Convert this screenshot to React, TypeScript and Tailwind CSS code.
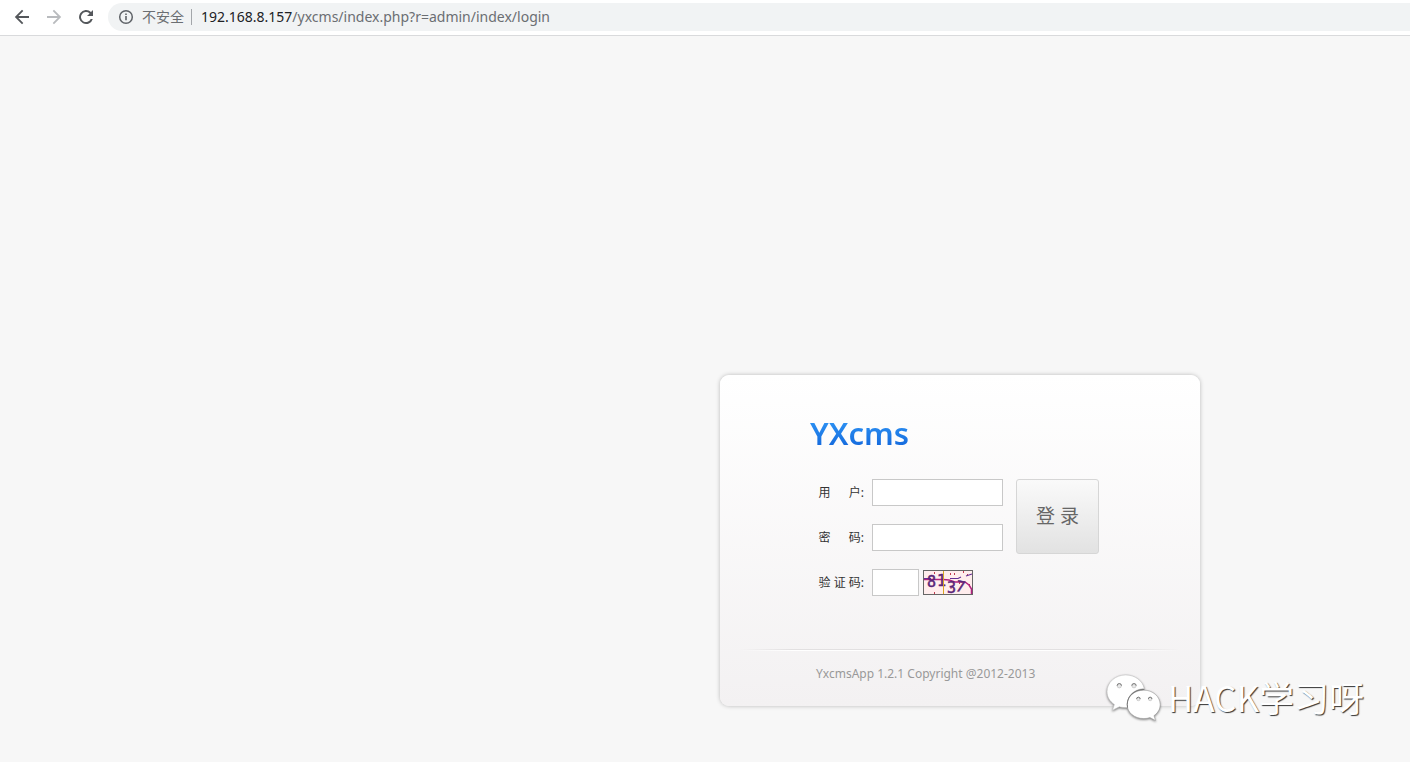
import type { ReactNode } from "react";

const fieldClass =
  "h-[27px] border border-[#c8c8c8] bg-white px-1 text-xs text-[#333333] outline-none";

function Field({ id, label, children }: { id: string; label: string; children: ReactNode }) {
  return (
    <div className="flex items-center gap-2">
      <label htmlFor={id} className="w-[54px] text-right text-xs whitespace-pre text-[#333333]">
        {label}
      </label>
      {children}
    </div>
  );
}

function BrowserBar() {
  return (
    <header className="flex h-9 items-start border-b border-[#d9dadc] bg-white pt-[3px] pl-[14px]">
      <nav className="flex h-7 items-center gap-4">
        <button type="button" aria-label="后退" className="text-[#54575b]">
          <svg width="16" height="16" viewBox="0 0 16 16" fill="currentColor">
            <path d="M15 7H4.400l4.900-4.900L8 .8.8 8 8 15.200l1.300-1.300L4.400 9H15z" />
          </svg>
        </button>
        <button type="button" aria-label="前进" className="text-[#b9bbbe]">
          <svg width="16" height="16" viewBox="0 0 16 16" fill="currentColor">
            <path d="M1 7h10.600L6.700 2.100 8 .8 15.200 8 8 15.200l-1.300-1.300L11.600 9H1z" />
          </svg>
        </button>
        <button type="button" aria-label="重新加载" className="text-[#54575b]">
          <svg width="16" height="16" viewBox="0 0 16 16" fill="currentColor">
            <path d="M13 3.050A7 7 0 1 0 14.800 10h-2.100A5.050 5.050 0 1 1 11.600 4.450L9 7h6V1z" />
          </svg>
        </button>
      </nav>
      <div className="ml-[14px] flex h-7 flex-1 items-center rounded-l-full bg-[#f1f3f4] pl-[10px] text-sm">
        <svg width="16" height="16" viewBox="0 0 16 16" fill="none" className="text-[#5f6368]">
          <circle cx="8" cy="8" r="6.300" stroke="currentColor" strokeWidth="1.500" />
          <path d="M7.200 7h1.600v4.300H7.200zM7.200 4.400h1.600V6H7.200z" fill="currentColor" />
        </svg>
        <span className="ml-2 text-[#6b6e72]">不安全</span>
        <span className="mr-[9px] ml-[7px] h-4 w-px bg-[#a3a6aa]" />
        <span className="text-[#6b6e72]">
          <span className="text-[#202124]">192.168.8.157</span>/yxcms/index.php?r=admin/index/login
        </span>
      </div>
    </header>
  );
}

function Captcha() {
  return (
    <svg
      width="50"
      height="25"
      viewBox="0 0 50 25"
      role="img"
      aria-label="验证码"
      className="overflow-visible"
    >
      <rect x="0.5" y="0.5" width="49" height="24" fill="#ffeded" stroke="#666666" />
      <path
        d="M11.500 2v2M27.500 3v2M31.500 3v2M40.500 1v2M44.500 4v2M11.500 22v2M46.500 14v2M36.500 12v2M27 18h2"
        stroke="#c03a50"
      />
      <path d="M1 9.500h19l6 .5 6 2h10l4 3 2.500 4v5" fill="none" stroke="#b1227f" strokeWidth="1.500" />
      <path d="M1 8.500h7M27 8.500h8l3-1.500M43 6l6-2" fill="none" stroke="#653095" strokeWidth="1.200" />
      <g
        fill="#5b2578"
        stroke="#5b2578"
        strokeWidth="0.5"
        fontFamily="DejaVu Sans Mono, monospace"
        fontSize="15"
      >
        <text x="4" y="17">8</text>
        <text x="14" y="16">1</text>
        <text x="24" y="23">3</text>
        <text x="33" y="22" transform="rotate(12 38 17)">7</text>
      </g>
      <path d="M20.500 1v23" stroke="#d9a521" strokeWidth="1" />
    </svg>
  );
}

function LoginCard() {
  return (
    <form className="w-[480px] rounded-[9px] bg-linear-to-b from-white to-[#f3f1f2] shadow-[0_0_4px_rgba(0,0,0,0.25)]">
      <h1 className="ml-[90px] w-fit bg-linear-to-b from-[#3ba6ff] from-40% to-[#1468dc] to-90% bg-clip-text pt-[35px] text-[31px] leading-[46px] font-semibold text-transparent">
        YXcms
      </h1>
      <div className="mt-[23px] ml-[90px] flex items-start gap-[13px]">
        <div className="flex flex-col gap-[18px]">
          <Field id="user" label={"用\u3000  户:"}>
            <input id="user" type="text" className={`${fieldClass} w-[131px]`} />
          </Field>
          <Field id="password" label={"密\u3000  码:"}>
            <input id="password" type="password" className={`${fieldClass} w-[131px]`} />
          </Field>
          <Field id="code" label="验 证 码:">
            <div className="flex items-center gap-1">
              <input id="code" type="text" className={`${fieldClass} w-[47px]`} />
              <Captcha />
            </div>
          </Field>
        </div>
        <button
          type="button"
          className="h-[75px] w-[83px] rounded-[3px] border border-[#d6d6d6] bg-linear-to-b from-[#fafafa] to-[#e2e2e2] text-[19px] text-[#666666]"
        >
          登 录
        </button>
      </div>
      <div className="mx-5 mt-[53px] h-px bg-[linear-gradient(to_right,transparent,#e2e0e1_12%,#e2e0e1_88%,transparent)]" />
      <div className="mx-5 h-px bg-[linear-gradient(to_right,transparent,#ffffff_12%,#ffffff_88%,transparent)]" />
      <p className="pt-[13px] pb-[22px] pl-24 text-xs leading-5 text-[#999999]">
        YxcmsApp 1.2.1 Copyright @2012-2013
      </p>
    </form>
  );
}

function Watermark() {
  return (
    <div className="pointer-events-none absolute right-[46px] bottom-10 flex items-center gap-[7px]">
      <svg width="55" height="49" viewBox="0 0 56 50" className="drop-shadow-[0_1px_1px_rgba(0,0,0,0.5)]">
        <path
          d="M20 2C9.500 2 1 9.500 1 19c0 5.500 2.800 10 7.500 13.200L6.500 38l7-3.500c2.500.7 5 .9 8.500.6C20 24.500 28 16 39 16 37.500 8 29.500 2 20 2z"
          fill="#ffffff"
          stroke="#c4c4c4"
          strokeWidth="0.6"
        />
        <path
          d="M38.500 17.500C29 17.500 21.500 24 21.500 32.200S29 46.500 38.500 46.500c2.300 0 4.300-.3 6.300-1l5.700 3-1.600-5c4-2.800 6.300-6.500 6.300-11.300 0-8.200-7.500-14.700-16.700-14.700z"
          fill="#ffffff"
          stroke="#a0a0a0"
          strokeWidth="0.6"
        />
        <path
          d="M22 35.500c-2-9.500 4.500-18.500 17-18.800"
          fill="none"
          stroke="#777777"
          strokeWidth="1"
        />
        <g fill="#e8e8e8" stroke="#b5b5b5" strokeWidth="0.6">
          <circle cx="13.500" cy="13" r="2.200" />
          <circle cx="28.500" cy="13" r="2.200" />
          <circle cx="33" cy="26.500" r="1.800" />
          <circle cx="45" cy="26.500" r="1.800" />
        </g>
        <path
          d="M11.300 13a2.200 2.200 0 0 1 4.400 0M26.300 13a2.200 2.200 0 0 1 4.400 0M31.200 26.500a1.800 1.800 0 0 1 3.600 0M43.200 26.500a1.800 1.800 0 0 1 3.600 0"
          fill="none"
          stroke="#777777"
          strokeWidth="1"
        />
      </svg>
      <span className="font-['Noto_Sans_CJK_SC',sans-serif] text-[35px] leading-[50px] text-white [text-shadow:1px_1px_1px_#333333]">
        HACK学习呀
      </span>
    </div>
  );
}

export default function App() {
  return (
    <div className="relative flex min-h-screen flex-col bg-[#f7f7f7] font-['Noto_Sans','Noto_Sans_CJK_SC',sans-serif]">
      <BrowserBar />
      <main className="flex flex-1 items-end justify-end pr-[210px] pb-14">
        <LoginCard />
      </main>
      <Watermark />
    </div>
  );
}
